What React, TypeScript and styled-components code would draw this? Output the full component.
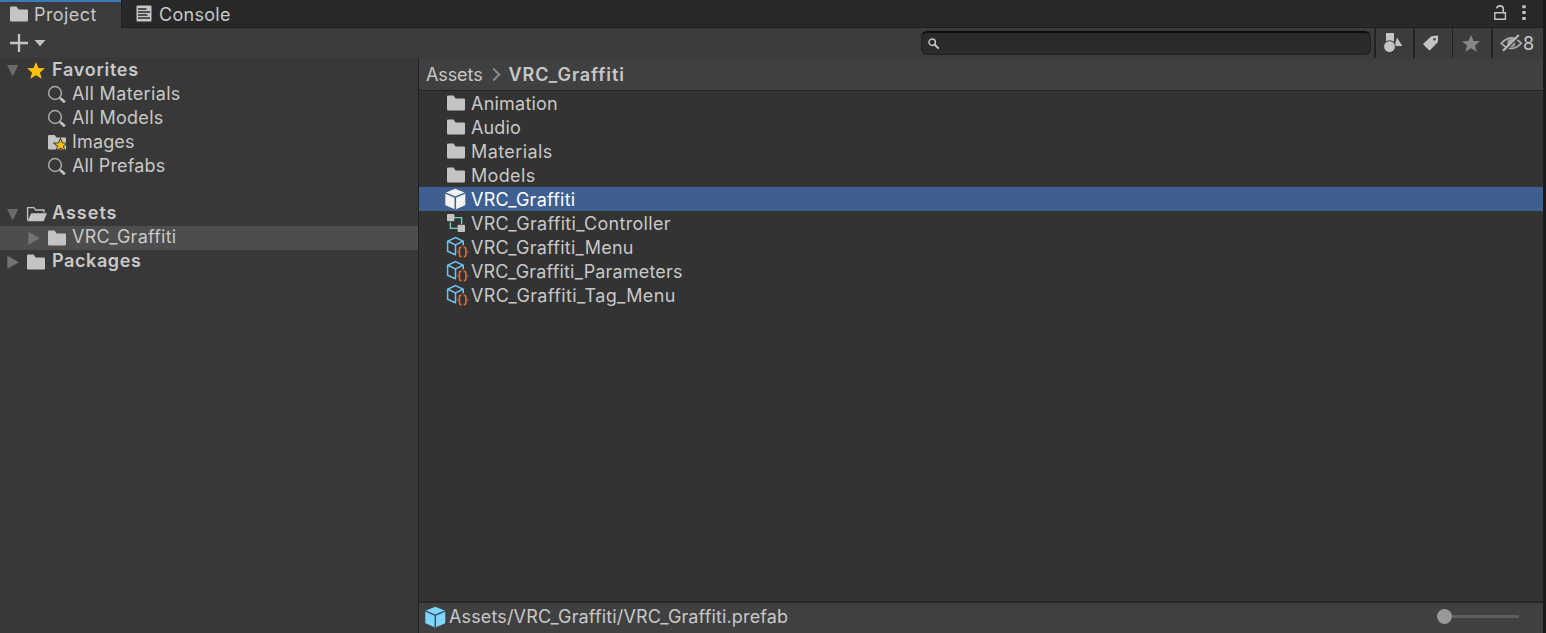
import React from "react";
import styled, { createGlobalStyle } from "styled-components";

const GlobalStyle = createGlobalStyle`
  *, *::before, *::after { box-sizing: border-box; }
  body { margin: 0; background: #1b1b1b; overflow: hidden; }
  svg { display: block; flex: none; overflow: visible; }
`;

const Frame = styled.div`
  width: 1546px;
  height: 633px;
  padding-right: 3px;
  background: #1b1b1b;
  display: flex;
  flex-direction: column;
  font-family: Inter, "Liberation Sans", sans-serif;
  font-size: 18px;
  color: #c8c8c8;
  white-space: nowrap;
`;

const TabBar = styled.div`
  height: 28px;
  display: flex;
  background: #282828;
  border-radius: 0 0 4px 0;
`;

const Tab = styled.div<{ $active?: boolean }>`
  display: flex;
  align-items: center;
  height: 28px;
  width: ${(p) => (p.$active ? "122px" : "auto")};
  padding: ${(p) => (p.$active ? "0 0 0 9px" : "0 0 0 13px")};
  gap: ${(p) => (p.$active ? "5px" : "6px")};
  background: ${(p) => (p.$active ? "#3c3c3c" : "transparent")};
  box-shadow: ${(p) => (p.$active ? "inset 0 2px #3a79bb" : "inset 0 -1px #1f1f1f")};
  border-right: ${(p) => (p.$active ? "1px solid #222" : "0")};
`;

const TabActions = styled.div`
  flex: 1;
  display: flex;
  justify-content: flex-end;
  align-items: flex-start;
  gap: 15px;
  padding: 5px 17px 0 0;
  box-shadow: inset 0 -1px #1f1f1f;
`;

const Toolbar = styled.div`
  height: 31px;
  display: flex;
  background: #3c3c3c;
`;

const CreateButton = styled.div`
  display: flex;
  align-items: center;
  gap: 6px;
  padding: 0 0 1px 10px;
  flex: 1;
`;

const SearchField = styled.div`
  width: 450px;
  height: 24px;
  margin: 3px 3px 0 0;
  padding: 1px 0 0 6px;
  display: flex;
  align-items: center;
  background: #2a2a2a;
  border: 1px solid #212121;
  border-top: 2px solid #0d0d0d;
  border-radius: 6px;
`;

const ToolButton = styled.div<{ $width: number; $inset: number; $edge?: number }>`
  width: ${(p) => p.$width}px;
  height: 30px;
  display: flex;
  align-items: center;
  padding-left: ${(p) => p.$inset}px;
  border-left: ${(p) => p.$edge ?? 2}px solid #232323;
`;

const Body = styled.div`
  flex: 1;
  display: flex;
  min-height: 0;
`;

const Sidebar = styled.div`
  width: 419px;
  background: #383838;
  border-right: 1px solid #212121;
  margin-top: -1px;
`;

const TreeGroup = styled.div`
  margin-bottom: 24px;
`;

const TreeRow = styled.div<{ $level?: number; $active?: boolean }>`
  height: 24px;
  display: flex;
  align-items: center;
  padding-left: ${(p) => 6 + (p.$level ?? 0) * 21}px;
  background: ${(p) => (p.$active ? "#4d4d4d" : "transparent")};
`;

const ArrowCell = styled.div`
  width: 20px;
  height: 24px;
  display: flex;
  align-items: center;
`;

const IconCell = styled.div<{ $width?: number; $inset?: number }>`
  width: ${(p) => p.$width ?? 25}px;
  height: 24px;
  padding-left: ${(p) => p.$inset ?? 0}px;
  display: flex;
  align-items: center;
`;

const Label = styled.span<{ $bold?: boolean; $shift?: number; $spacing?: number }>`
  line-height: 24px;
  font-weight: ${(p) => (p.$bold ? 600 : 400)};
  letter-spacing: ${(p) => p.$spacing ?? 0.25}px;
  margin-top: ${(p) => p.$shift ?? 0}px;
`;

const Main = styled.div`
  flex: 1;
  display: flex;
  flex-direction: column;
  background: #333;
`;

const Breadcrumb = styled.div`
  height: 32px;
  display: flex;
  align-items: center;
  padding-left: 7px;
  gap: 8px;
  background: #404040;
  border-bottom: 1px solid #242424;
`;

const FileList = styled.div`
  flex: 1;
`;

const FileRow = styled.div<{ $selected?: boolean }>`
  height: 24px;
  display: flex;
  align-items: center;
  padding-left: 25px;
  color: ${(p) => (p.$selected ? "#fff" : "inherit")};
  background: ${(p) => (p.$selected ? "#3e5f8f" : "transparent")};
`;

const Footer = styled.div`
  height: 32px;
  display: flex;
  align-items: center;
  padding: 0 24px 0 5px;
  background: #404040;
  border-top: 2px solid #282828;
`;

const FooterPath = styled.div`
  flex: 1;
  display: flex;
  align-items: center;
  gap: 3px;
  height: 28px;
  margin-top: -2px;
`;

const Slider = styled.div`
  width: 82px;
  display: flex;
  align-items: center;
  margin-top: -3px;
`;

const Knob = styled.div`
  width: 15px;
  height: 15px;
  border-radius: 50%;
  background: #999;
`;

const Track = styled.div`
  flex: 1;
  height: 3px;
  background: #5e5e5e;
`;

const Folder = () => (
  <svg width="20" height="18" viewBox="0 0 20 18">
    <path d="M1 2.7Q1 1.5 2.2 1.5H7.6L9.6 4.5H18Q19 4.5 19 5.5V15.3Q19 16.5 17.8 16.5H2.2Q1 16.5 1 15.3Z" fill="#c4c4c4" />
  </svg>
);

const OpenFolder = () => (
  <svg width="22" height="18" viewBox="0 0 22 18">
    <path d="M1.6 15.5V2.6H7.8L9.8 5H17.9V7.5" fill="none" stroke="#c4c4c4" strokeWidth="1.3" />
    <path d="M5.2 8.2H21L17.6 16.2H1.6Z" fill="#c4c4c4" />
  </svg>
);

const STAR = "M9 0L11.5 6L18 6.4L13 10.6L14.7 16.8L9 13.4L3.3 16.8L5 10.6L0 6.4L6.5 6Z";

const Star = ({ size = 18, color = "#ffc107" }: { size?: number; color?: string }) => (
  <svg width={size} height={size * 0.94} viewBox="0 0 18 17">
    <path d={STAR} fill={color} />
  </svg>
);

const FavoriteFolder = () => (
  <svg width="20" height="18" viewBox="0 0 20 18">
    <path d="M1 3.2Q1 2 2.2 2H7.6L9.6 4.5H18Q19 4.5 19 5.5V16.5H2.2Q1 16.5 1 15.3Z" fill="#c4c4c4" />
    <path d={STAR} transform="translate(8 6.5) scale(.61)" fill="#ffc107" stroke="#383838" strokeWidth="3" paintOrder="stroke" />
  </svg>
);

const Lens = () => (
  <svg width="20" height="20" viewBox="0 0 20 20">
    <circle cx="8" cy="9" r="6.4" fill="none" stroke="#a9a9a9" strokeWidth="1.5" />
    <path d="M13 14L17.9 18.3" stroke="#c4c4c4" strokeWidth="2.6" />
  </svg>
);

const SmallLens = () => (
  <svg width="12" height="12" viewBox="0 0 12 12">
    <circle cx="4.2" cy="4.2" r="3.2" fill="none" stroke="#c4c4c4" strokeWidth="1.5" />
    <path d="M6.5 6.5L10.8 10.6" stroke="#c4c4c4" strokeWidth="2" />
  </svg>
);

const Arrow = ({ open }: { open?: boolean }) => (
  <svg width="14" height="14" viewBox="0 0 14 14">
    <path d={open ? "M1 2H12.3L6.7 13.5Z" : "M1.3 .7V13.7L13 7.2Z"} fill={open ? "#6a6a6a" : "#737373"} />
  </svg>
);

const Cube = ({ face, edge }: { face: string; edge: string }) => (
  <svg width="22" height="22" viewBox="0 0 22 22">
    <path d="M11.3 .7L20.6 4.4L21.3 5V16.6Q21.3 17.3 20.7 17.6L11.3 21.4L1.9 17.6Q1.3 17.3 1.3 16.6V5L2 4.4Z" fill={face} />
    <path d="M1.1 4.9L11.3 9.3L21.5 4.9M11.3 9.3V21.5" fill="none" stroke={edge} strokeWidth="1.5" />
  </svg>
);

const Controller = () => (
  <svg width="20" height="20" viewBox="0 0 20 20">
    <path d="M8 4.6H15.6V11M4.4 9.5V15.4H12" fill="none" stroke="#68d8bd" strokeWidth="1.4" />
    <rect x="1" y="1" width="7.4" height="7.2" rx="1" fill="#c4c4c4" />
    <rect x="11.6" y="11.8" width="7.4" height="7.2" rx="1" fill="#c4c4c4" />
  </svg>
);

const ScriptObject = () => (
  <svg width="22" height="22" viewBox="0 0 22 22">
    <path d="M10 19L1.6 15.2V5.2L9.5 1.6L17.2 5.2V9.5M1.6 5.2L9.5 9L17.2 5.2M9.5 9V18.6" fill="none" stroke="#6fc3ee" strokeWidth="1.5" />
    <path
      d="M15.6 11.4H14.6Q13.5 11.4 13.5 12.5V14.5Q13.5 15.8 11.8 15.9Q13.5 16 13.5 17.3V19.3Q13.5 20.6 14.6 20.6H15.6M17.7 11.4H18.7Q19.8 11.4 19.8 12.5V14.5Q19.8 15.8 21.5 15.9Q19.8 16 19.8 17.3V19.3Q19.8 20.6 18.7 20.6H17.7"
      fill="none"
      stroke="#e2673d"
      strokeWidth="1.6"
    />
  </svg>
);

const ConsoleIcon = () => (
  <svg width="18" height="18" viewBox="0 0 18 18">
    <rect x="1.5" y=".5" width="15" height="16" rx="1" fill="#c4c4c4" />
    <path d="M3 4H11.5M3 7H15M3 10H12.5M3 13H15" stroke="#282828" strokeWidth="1.3" />
  </svg>
);

const Lock = () => (
  <svg width="13" height="16" viewBox="0 0 13 16">
    <path d="M.8 7.8H11.4V14.3H.8Z" fill="none" stroke="#c4c4c4" strokeWidth="1.4" />
    <path d="M2.7 3.4Q3.3 .9 6 .9Q9.3 .9 9.3 4.2V7.5" fill="none" stroke="#c4c4c4" strokeWidth="1.6" />
  </svg>
);

const Kebab = () => (
  <svg width="4" height="16" viewBox="0 0 4 16">
    <path d="M.3 .2H3.7V3.2H.3ZM.3 6H3.7V9H.3ZM.3 12H3.7V15H.3Z" fill="#c4c4c4" />
  </svg>
);

const Shapes = () => (
  <svg width="20" height="20" viewBox="0 0 20 20">
    <path d="M2 0H10V8.5H2ZM13 4.5L18.3 13H10.5Z" fill="#c4c4c4" />
    <circle cx="5.5" cy="13.6" r="5.9" fill="#c4c4c4" stroke="#3c3c3c" strokeWidth="1" />
  </svg>
);

const TagIcon = () => (
  <svg width="16" height="16" viewBox="0 0 16 16">
    <path
      fillRule="evenodd"
      d="M.5 8.5L8.4 1.2L14.3 .6Q15.2 .6 15.2 1.5L14.8 7.3L7.2 15Q6.5 15.6 5.9 15L.5 9.7Q0 9.1 .5 8.5ZM10.2 4.2A1.3 1.3 0 1 0 12.8 4.2A1.3 1.3 0 1 0 10.2 4.2Z"
      fill="#c4c4c4"
    />
  </svg>
);

const HiddenEye = () => (
  <svg width="23" height="18" viewBox="0 0 23 18">
    <path d="M1.3 9.3Q6.3 4 11.3 4Q16.3 4 21.3 9.3Q16.3 14.3 11.3 14.3Q6.3 14.3 1.3 9.3Z" fill="none" stroke="#aaa" strokeWidth="1.8" />
    <circle cx="11.3" cy="9" r="4" fill="#a4a4a4" />
    <path d="M4.5 17.4L20.3 1.8" stroke="#3c3c3c" strokeWidth="1.6" />
    <path d="M3 16.8L18.8 1" stroke="#b8b8b8" strokeWidth="2.2" />
  </svg>
);

const folders = [
  { name: "Animation", spacing: 0.22 },
  { name: "Audio", spacing: 0.15 },
  { name: "Materials", spacing: 0.42 },
  { name: "Models", spacing: 0.35 },
];

const scriptAssets = [
  { name: "VRC_Graffiti_Menu", spacing: 0.26 },
  { name: "VRC_Graffiti_Parameters", spacing: 0.18 },
  { name: "VRC_Graffiti_Tag_Menu", spacing: 0.37 },
];

const favorites = [
  { name: "All Materials", icon: <Lens />, spacing: 0.35 },
  { name: "All Models", icon: <Lens />, spacing: 0.3 },
  { name: "Images", icon: <FavoriteFolder />, spacing: 0.15 },
  { name: "All Prefabs", icon: <Lens />, spacing: 0.15 },
];

type FileItemProps = {
  name: string;
  icon: React.ReactNode;
  spacing?: number;
  inset?: number;
  selected?: boolean;
};

const FileItem = ({ name, icon, spacing, inset = 2, selected }: FileItemProps) => (
  <FileRow $selected={selected}>
    <IconCell $width={27} $inset={inset}>{icon}</IconCell>
    <Label $shift={1} $spacing={spacing}>{name}</Label>
  </FileRow>
);

export default function App() {
  return (
    <Frame>
      <GlobalStyle />
      <TabBar>
        <Tab $active>
          <Folder />
          <Label $shift={2} $spacing={0.42}>Project</Label>
        </Tab>
        <Tab>
          <ConsoleIcon />
          <Label $shift={2} $spacing={0.3}>Console</Label>
        </Tab>
        <TabActions>
          <Lock />
          <Kebab />
        </TabActions>
      </TabBar>
      <Toolbar>
        <CreateButton>
          <svg width="18" height="18" viewBox="0 0 18 18">
            <path d="M9 0V18M0 9H18" stroke="#c4c4c4" strokeWidth="2.3" />
          </svg>
          <svg width="12" height="8" viewBox="0 0 12 8">
            <path d="M.5 1H11.5L6 7.3Z" fill="#c4c4c4" />
          </svg>
        </CreateButton>
        <SearchField>
          <SmallLens />
        </SearchField>
        <ToolButton $width={39} $inset={8}>
          <Shapes />
        </ToolButton>
        <ToolButton $width={39} $inset={8}>
          <TagIcon />
        </ToolButton>
        <ToolButton $width={39} $inset={9} $edge={1}>
          <Star size={18} color="#868686" />
        </ToolButton>
        <ToolButton $width={52} $inset={7}>
          <HiddenEye />
          <Label $spacing={0} $shift={2}>8</Label>
        </ToolButton>
      </Toolbar>
      <Body>
        <Sidebar>
          <TreeGroup>
            <TreeRow>
              <ArrowCell><Arrow open /></ArrowCell>
              <IconCell $width={26} $inset={1}><Star /></IconCell>
              <Label $bold $spacing={0.74}>Favorites</Label>
            </TreeRow>
            {favorites.map((f) => (
              <TreeRow key={f.name} $level={1}>
                <ArrowCell />
                <IconCell>{f.icon}</IconCell>
                <Label $spacing={f.spacing}>{f.name}</Label>
              </TreeRow>
            ))}
          </TreeGroup>
          <TreeRow>
            <ArrowCell><Arrow open /></ArrowCell>
            <IconCell $width={26}><OpenFolder /></IconCell>
            <Label $bold $shift={-2} $spacing={1}>Assets</Label>
          </TreeRow>
          <TreeRow $level={1} $active>
            <ArrowCell><Arrow /></ArrowCell>
            <IconCell><Folder /></IconCell>
            <Label $shift={-2}>VRC_Graffiti</Label>
          </TreeRow>
          <TreeRow>
            <ArrowCell><Arrow /></ArrowCell>
            <IconCell $width={26}><Folder /></IconCell>
            <Label $bold $shift={-2} $spacing={0.6}>Packages</Label>
          </TreeRow>
        </Sidebar>
        <Main>
          <Breadcrumb>
            <Label $spacing={-0.1}>Assets</Label>
            <svg width="10" height="14" viewBox="0 0 10 14">
              <path d="M2.2 .5L8.2 6.5L2.2 12.5" fill="none" stroke="#8a8a8a" strokeWidth="2" />
            </svg>
            <Label $bold $spacing={0.95}>VRC_Graffiti</Label>
          </Breadcrumb>
          <FileList>
            {folders.map((f) => (
              <FileItem key={f.name} name={f.name} spacing={f.spacing} icon={<Folder />} />
            ))}
            <FileItem name="VRC_Graffiti" inset={0} icon={<Cube face="#f2f2f2" edge="#3e5f8f" />} selected />
            <FileItem name="VRC_Graffiti_Controller" spacing={0.31} icon={<Controller />} />
            {scriptAssets.map((f) => (
              <FileItem key={f.name} name={f.name} spacing={f.spacing} icon={<ScriptObject />} />
            ))}
          </FileList>
          <Footer>
            <FooterPath>
              <Cube face="#7fd6fd" edge="#31536a" />
              <Label $spacing={0.14}>Assets/VRC_Graffiti/VRC_Graffiti.prefab</Label>
            </FooterPath>
            <Slider>
              <Knob />
              <Track />
            </Slider>
          </Footer>
        </Main>
      </Body>
    </Frame>
  );
}
